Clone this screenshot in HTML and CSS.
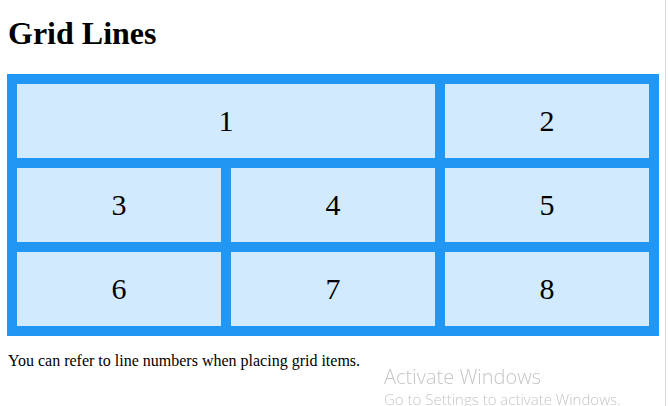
FILE: index.html
```html
<!DOCTYPE html>
<html>
<head>
<meta charset="utf-8">
<link rel="stylesheet" href="styles.css">
</head>
<body>
<h1 class="title">Grid Lines</h1>
<div class="grid-container">
  <div class="item item1">1</div>
  <div class="item">2</div>
  <div class="item">3</div>
  <div class="item">4</div>
  <div class="item">5</div>
  <div class="item">6</div>
  <div class="item">7</div>
  <div class="item">8</div>
</div>
<p class="note">You can refer to line numbers when placing grid items.</p>
<div class="watermark">
  <div class="wm-title">Activate Windows</div>
  <div class="wm-sub">Go to Settings to activate Windows.</div>
</div>
<div class="edge"></div>
</body>
</html>
```
FILE: styles.css
```css
html, body {
  background: #fff;
}
body {
  margin: 0 9px 0 7px;
  font-family: "Liberation Serif", "Times New Roman", serif;
  font-size: 16px;
  color: #000;
}
.title {
  font-size: 32px;
  font-weight: bold;
  margin: 15px 0 22px 1px;
  line-height: 37px;
}
.grid-container {
  display: grid;
  grid-template-columns: 1fr 1fr 1fr;
  gap: 10px;
  background-color: #2196F3;
  padding: 10px;
}
.item {
  background-color: rgba(255, 255, 255, 0.8);
  text-align: center;
  padding: 20px 0;
  font-size: 30px;
  line-height: 34px;
}
.item1 {
  grid-column: 1 / 3;
}
.note {
  margin: 16px 0 0 1px;
}
.watermark {
  position: fixed;
  left: 384px;
  top: 364px;
  font-family: "Open Sans", "Noto Sans", sans-serif;
  color: #c6c6c6;
}
.wm-title {
  font-size: 20px;
  line-height: 25px;
  font-weight: 300;
}
.wm-sub {
  font-size: 15px;
  line-height: 20px;
  font-weight: 300;
}
.edge {
  position: fixed;
  top: 0;
  bottom: 0;
  left: 665px;
  width: 1px;
  background: #dcdcdc;
}
```
